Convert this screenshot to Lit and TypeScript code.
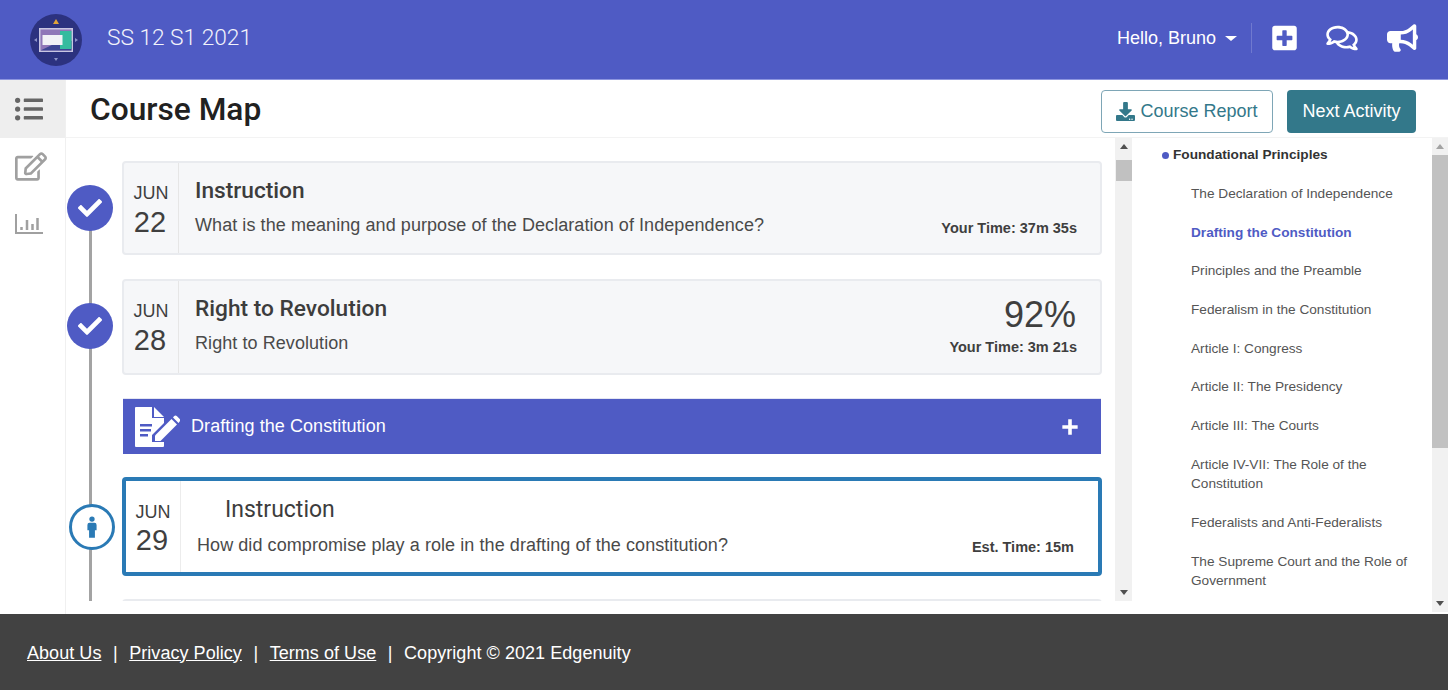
import { LitElement, html, css, svg } from "lit";
import { customElement } from "lit/decorators.js";

const CHECK = "M173.898 439.404l-166.4-166.4c-9.997-9.997-9.997-26.206 0-36.204l36.203-36.204c9.997-9.998 26.207-9.998 36.204 0L192 312.69 432.095 72.596c9.997-9.997 26.207-9.997 36.204 0l36.203 36.204c9.997 9.997 9.997 26.206 0 36.204l-294.4 294.401c-9.998 9.997-26.207 9.997-36.204-.001z";
const PLUS_SQUARE = "M400 32H48C21.5 32 0 53.5 0 80v352c0 26.5 21.5 48 48 48h352c26.5 0 48-21.5 48-48V80c0-26.5-21.5-48-48-48zm-32 252c0 6.6-5.4 12-12 12h-92v92c0 6.6-5.4 12-12 12h-56c-6.6 0-12-5.4-12-12v-92H92c-6.6 0-12-5.4-12-12v-56c0-6.6 5.4-12 12-12h92v-92c0-6.6 5.4-12 12-12h56c6.6 0 12 5.4 12 12v92h92c6.6 0 12 5.4 12 12v56z";
const COMMENTS = "M532 386.2c27.5-27.1 44-61.1 44-98.2 0-80-76.5-146.1-176.2-157.9C368.3 72.5 294.3 32 208 32 93.1 32 0 103.6 0 192c0 37 16.5 71 44 98.2-15.3 30.7-37.3 54.5-37.7 54.9-6.3 6.7-8.1 16.5-4.4 25 3.6 8.5 12 14 21.2 14 53.5 0 96.7-20.2 125.2-38.8 9.2 2.1 18.7 3.7 28.4 4.9C208.1 407.6 281.8 448 368 448c20.8 0 40.8-2.4 59.8-6.8C456.3 459.7 499.4 480 553 480c9.2 0 17.5-5.5 21.2-14 3.6-8.5 1.9-18.3-4.4-25-.4-.3-22.5-24.1-37.8-54.8zm-392.8-92.3L122.1 305c-14.1 9.1-28.5 16.3-43.1 21.4 2.7-4.7 5.4-9.7 8-14.8l15.5-31.1L77.7 256C64.2 242.6 48 220.7 48 192c0-60.7 73.3-112 160-112s160 51.3 160 112-73.3 112-160 112c-16.5 0-33-1.9-49-5.6l-19.8-4.5zM498.3 352l-24.7 24.4 15.5 31.1c2.6 5.1 5.3 10.1 8 14.8-14.6-5.1-29-12.3-43.1-21.4l-17.1-11.1-19.9 4.6c-16 3.7-32.5 5.6-49 5.6-54 0-102.2-20.1-131.3-49.7C338 339.5 416 272.9 416 192c0-3.4-.4-6.7-.7-10C479.7 196.5 528 238.8 528 288c0 28.7-16.2 50.6-29.7 64z";
const BULLHORN = "M576 240c0-23.63-12.95-44.04-32-55.12V32.01C544 23.26 537.02 0 512 0c-7.12 0-14.19 2.38-19.98 7.02l-85.03 68.03C364.28 109.19 310.66 128 256 128H64c-35.35 0-64 28.65-64 64v96c0 35.35 28.65 64 64 64h33.7c-1.39 10.48-2.18 21.14-2.18 32 0 39.77 9.26 77.35 25.56 110.94 5.19 10.69 16.52 17.06 28.4 17.06h74.28c26.05 0 41.69-29.84 25.9-50.56-16.4-21.52-26.15-48.36-26.15-77.44 0-11.11 1.62-21.79 4.41-32H256c54.66 0 108.28 18.81 150.98 52.95l85.03 68.03a32.023 32.023 0 0 0 19.98 7.02c24.92 0 32-22.78 32-32V295.13C563.05 284.04 576 263.63 576 240zm-96 141.42l-33.05-26.44C392.95 311.78 325.12 288 256 288v-96c69.12 0 136.95-23.78 190.95-66.98L480 98.58v282.84z";
const EDIT = "M402.3 344.9l32-32c5-5 13.7-1.5 13.7 5.7V464c0 26.5-21.5 48-48 48H48c-26.5 0-48-21.5-48-48V112c0-26.5 21.5-48 48-48h273.5c7.1 0 10.7 8.6 5.7 13.7l-32 32c-1.5 1.5-3.5 2.3-5.7 2.3H48v352h352V350.5c0-2.1.8-4.1 2.3-5.6zm156.6-201.8L296.3 405.7l-90.4 10c-26.2 2.9-48.5-19.2-45.6-45.6l10-90.4L432.9 17.1c22.9-22.9 59.9-22.9 82.7 0l43.2 43.2c22.9 22.9 22.9 60 .1 82.8zM460.1 174L402 115.9 216.2 301.8l-7.3 65.3 65.3-7.3L460.1 174zm64.8-79.7l-43.2-43.2c-4.1-4.1-10.8-4.1-14.8 0L436 82l58.1 58.1 30.9-30.9c4-4.2 4-10.8-.1-14.9z";
const LIST = "M48 48a48 48 0 1 0 48 48 48 48 0 0 0-48-48zm0 160a48 48 0 1 0 48 48 48 48 0 0 0-48-48zm0 160a48 48 0 1 0 48 48 48 48 0 0 0-48-48zm448 16H176a16 16 0 0 0-16 16v32a16 16 0 0 0 16 16h320a16 16 0 0 0 16-16v-32a16 16 0 0 0-16-16zm0-320H176a16 16 0 0 0-16 16v32a16 16 0 0 0 16 16h320a16 16 0 0 0 16-16V80a16 16 0 0 0-16-16zm0 160H176a16 16 0 0 0-16 16v32a16 16 0 0 0 16 16h320a16 16 0 0 0 16-16v-32a16 16 0 0 0-16-16z";
const DOWNLOAD = "M216 0h80c13.3 0 24 10.7 24 24v168h87.7c17.8 0 26.7 21.5 14.1 34.1L269.7 378.3c-7.5 7.5-19.8 7.5-27.3 0L90.1 226.1c-12.6-12.6-3.7-34.1 14.1-34.1H192V24c0-13.3 10.7-24 24-24zm296 376v112c0 13.3-10.7 24-24 24H24c-13.3 0-24-10.7-24-24V376c0-13.3 10.7-24 24-24h146.7l49 49c20.1 20.1 52.5 20.1 72.6 0l49-49H488c13.3 0 24 10.7 24 24zm-124 88c0-11-9-20-20-20s-20 9-20 20 9 20 20 20 20-9 20-20zm64 0c0-11-9-20-20-20s-20 9-20 20 9 20 20 20 20-9 20-20z";

const icon = (d: string, vb: string, w: number, h: number) =>
  html`<svg viewBox=${vb} width=${w} height=${h} fill="currentColor"><path d=${d}></path></svg>`;

const logo = html`<svg viewBox="0 0 52 52" width="52" height="52">
  <circle cx="26" cy="26" r="26" fill="#2c327f"></circle>
  <path d="M26 5l3 5h-6z" fill="#e0a43a"></path>
  <path d="M26 47l-2-3h4zM4 26l3-2v4zM48 26l-3-2v4z" fill="#8d93c9"></path>
  <rect x="9" y="14" width="34" height="24" fill="#c9c6e2"></rect>
  <path d="M10.500 15.500h31v21h-31z" fill="#8f77b8"></path>
  <path d="M10.500 36.500L30 27h11.500v9.500z" fill="#3d4593"></path>
  <rect x="30" y="17" width="11.500" height="18" fill="#35bb9f"></rect>
  <rect x="12.500" y="21" width="20" height="10" fill="#f1f1f6"></rect>
</svg>`;

const formIcon = html`<svg viewBox="0 0 46 42" width="46" height="42" fill="#fff">
  <path d="M1 2a1 1 0 0 1 1-1h16v11h12v5L18 29v7h12v4a1 1 0 0 1-1 1H2a1 1 0 0 1-1-1z"></path>
  <path d="M20 1l10 10H20z"></path>
  <path d="M6 18h12v2.500H6zM6 23h11v2.500H6zM6 28h8v2.500H6z" fill="#4f5bc4"></path>
  <path d="M21 35v-5.500L37.500 13l5.500 5.500L26.500 35z"></path>
  <path d="M39 11.500l5.500 5.500 1-1.200a2.200 2.200 0 0 0 0-3L43 10.200a2.200 2.200 0 0 0-3 0z"></path>
</svg>`;

const chart = html`<svg viewBox="0 0 28 20" width="28" height="20" fill="none" stroke="#a0a0a0" stroke-width="2">
  <path d="M1 0v19h27"></path>
  <path d="M6.500 16v-3M12 16V6M17.500 16v-6M22.500 16V4" stroke-width="2.500"></path>
</svg>`;

const person = svg`<svg viewBox="0 0 12 26" width="10" height="22" fill="#2a7ab5">
  <circle cx="6" cy="3.500" r="3.200"></circle>
  <path d="M3 8h6a2.500 2.500 0 0 1 2.500 2.500V17H9.500v9h-7v-9H.5v-6.500A2.500 2.500 0 0 1 3 8z"></path>
</svg>`;

const lessons = [
  "The Declaration of Independence",
  "Drafting the Constitution",
  "Principles and the Preamble",
  "Federalism in the Constitution",
  "Article I: Congress",
  "Article II: The Presidency",
  "Article III: The Courts",
  "Article IV-VII: The Role of the Constitution",
  "Federalists and Anti-Federalists",
  "The Supreme Court and the Role of Government",
];

@customElement("app-root")
export class AppRoot extends LitElement {
  static styles = css`
    :host {
      display: flex;
      flex-direction: column;
      height: 690px;
      width: 1448px;
      overflow: hidden;
      font-family: "Liberation Sans", Arial, sans-serif;
      color: #3f3f3f;
      background: #fff;
    }
    .top {
      height: 79px;
      flex: none;
      box-sizing: content-box;
      background: #4f5bc4;
      border-bottom: 1px solid #8d95df;
      display: flex;
      align-items: center;
      padding: 0 30px;
      color: #fff;
    }
    .logo { display: flex; margin-right: 25px; margin-top: 1px; }
    .course { font: 300 22.700px Roboto, sans-serif; color: #f2f3fb; margin-bottom: 4px; }
    .spacer { flex: 1; }
    .hello { font-size: 18px; display: flex; align-items: center; margin-bottom: 2px; }
    .caret {
      width: 0; height: 0; margin-left: 9px;
      border-left: 6px solid transparent;
      border-right: 6px solid transparent;
      border-top: 5px solid #fff;
    }
    .sep { width: 1px; height: 30px; background: #7079cf; margin: 0 20px 3px 14px; }
    .actions { display: flex; align-items: center; gap: 29px; margin-bottom: 3px; }
    .actions svg { display: block; }
    .main { flex: 1; display: flex; min-height: 0; }
    .side {
      width: 65px;
      flex: none;
      border-right: 1px solid #f0f0f0;
      color: #a0a0a0;
      display: flex;
      flex-direction: column;
    }
    .side .on {
      height: 58px;
      background: #eee;
      color: #666;
      display: flex;
      align-items: center;
      padding-left: 15px;
    }
    .side .edit { margin: 14px 0 0 15px; }
    .side .bars { margin: 33px 0 0 15px; }
    .side svg { display: block; }
    .content { flex: 1; min-width: 0; display: flex; flex-direction: column; }
    .title {
      height: 58px;
      flex: none;
      box-sizing: border-box;
      border-bottom: 1px solid #f3f3f3;
      display: flex;
      align-items: center;
      padding: 0 32px 0 24px;
    }
    h1 { margin: 2px 0 0; font: 500 31.700px Roboto, sans-serif; color: #212121; }
    .btn {
      height: 43px;
      box-sizing: border-box;
      border-radius: 4px;
      font-size: 18px;
      display: flex;
      align-items: center;
      justify-content: center;
      margin-top: 5px;
    }
    .outline {
      width: 172px;
      border: 1px solid #7ea6b6;
      color: #33788a;
      gap: 5px;
      margin-right: 14px;
    }
    .solid { width: 129px; background: #33788a; color: #fff; }
    .below { flex: 1; min-height: 0; display: flex; }
    .left { width: 1066px; flex: none; height: 463px; display: flex; }
    .timeline {
      position: relative;
      width: 1049px;
      flex: none;
      height: 463px;
      overflow: hidden;
      box-sizing: border-box;
      padding: 23px 0 0 56px;
      display: flex;
      flex-direction: column;
      gap: 23px;
    }
    .line {
      position: absolute;
      left: 23px;
      top: 80px;
      bottom: 0;
      width: 3px;
      background: #a3a3a3;
    }
    .entry { position: relative; width: 980px; flex: none; }
    .entry.first { margin-bottom: 1px; }
    .dot {
      position: absolute;
      left: -55px;
      top: 24px;
      width: 46px;
      height: 46px;
      border-radius: 50%;
      background: #4f5bc4;
      color: #fff;
      display: flex;
      align-items: center;
      justify-content: center;
    }
    .dot.here {
      left: -53px;
      top: 27px;
      box-sizing: border-box;
      background: #fff;
      border: 3px solid #2a7ab5;
    }
    .card {
      box-sizing: border-box;
      height: 94px;
      border: 2px solid #e9ebef;
      border-radius: 4px;
      background: #f6f7f9;
      display: flex;
    }
    .card.tall { height: 96px; }
    .card.current {
      height: 99px;
      background: #fff;
      border: 4px solid #2a7ab5;
    }
    .date {
      width: 55px;
      flex: none;
      border-right: 1px solid #e6e6e6;
      display: flex;
      flex-direction: column;
      align-items: center;
      padding-top: 20px;
      box-sizing: border-box;
    }
    .current .date { padding-top: 21px; border-right-color: #ececec; }
    .mon { font-size: 18px; line-height: 20px; }
    .day { font-size: 29px; line-height: 35px; margin: 2px 2px 0 0; }
    .current .day { margin-top: 1px; }
    .body {
      flex: 1;
      min-width: 0;
      position: relative;
      padding: 14px 23px 0 16px;
    }
    .current .body { padding: 15px 23px 0 16px; }
    .name { font: 500 22.700px/28px Roboto, sans-serif; color: #3d3d3d; }
    .current .name { margin-left: 28px; font-weight: 400; font-size: 23px; }
    .desc { font-size: 18px; line-height: 22px; margin-top: 9px; color: #4a4a4a; letter-spacing: 0.07px; }
    .current .desc { margin-top: 10px; }
    .time {
      position: absolute;
      right: 23px;
      bottom: 16px;
      font-size: 14.500px;
      line-height: 18px;
      font-weight: 700;
    }
    .tall .time { bottom: 17px; }
    .current .time { right: 24px; }
    .pct {
      position: absolute;
      right: 24px;
      top: 13px;
      font-size: 36px;
      line-height: 42px;
    }
    .band {
      height: 56px;
      box-sizing: border-box;
      margin: 0 1px;
      border-top: 1px solid #e4e6f2;
      background: #4f5bc4;
      color: #fff;
      display: flex;
      align-items: center;
      padding: 0 22px 0 11px;
      font-size: 18px;
      letter-spacing: 0.07px;
    }
    .band span { flex: 1; margin-left: 11px; }
    .bar {
      flex: none;
      background: #f1f1f1;
      display: flex;
      flex-direction: column;
      align-items: center;
      box-sizing: border-box;
    }
    .bar.a { width: 17px; height: 463px; }
    .bar.b { width: 16px; height: 474px; }
    .up, .down {
      width: 0; height: 0; flex: none;
      border-left: 4.500px solid transparent;
      border-right: 4.500px solid transparent;
    }
    .up { border-bottom: 5px solid #505050; margin-top: 6px; }
    .down { border-top: 5px solid #505050; margin: auto 0 6px; }
    .b .up { border-bottom-color: #a3a3a3; }
    .thumb { width: 16px; background: #c1c1c1; flex: none; }
    .a .thumb { height: 21px; margin-top: 11px; }
    .b .thumb { width: 16px; height: 293px; margin-top: 6px; }
    .nav { flex: 1; min-width: 0; height: 474px; overflow: hidden; padding: 8px 0 0 30px; box-sizing: border-box; }
    .unit {
      font-size: 13.650px;
      font-weight: 700;
      line-height: 18px;
      color: #333;
      display: flex;
      align-items: center;
      gap: 4px;
      margin-bottom: 20px;
    }
    .unit i { width: 7px; height: 7px; border-radius: 50%; background: #4f5bc4; }
    ul { list-style: none; margin: 0; padding: 0 20px 0 29px; }
    li {
      font-size: 13.650px;
      line-height: 19.600px;
      margin-bottom: 19.100px;
      color: #555;
    }
    li.active { color: #4f5bc4; font-weight: 700; }
    .foot {
      height: 76px;
      flex: none;
      box-sizing: border-box;
      padding: 2px 0 0 27px;
      background: #424242;
      color: #fff;
      display: flex;
      align-items: center;
      font-size: 18px;
      letter-spacing: 0.05px;
      gap: 11.500px;
    }
    .foot a { color: #fff; text-decoration: underline; }
  `;

  render() {
    const check = icon(CHECK, "0 0 512 512", 24, 24);
    return html`
      <header class="top">
        <div class="logo">${logo}</div>
        <div class="course">SS 12 S1 2021</div>
        <div class="spacer"></div>
        <div class="hello">Hello, Bruno<span class="caret"></span></div>
        <div class="sep"></div>
        <div class="actions">
          ${icon(PLUS_SQUARE, "0 0 448 512", 25, 28)}
          ${icon(COMMENTS, "0 0 576 512", 32, 28)}
          ${icon(BULLHORN, "0 0 576 512", 31, 28)}
        </div>
      </header>
      <div class="main">
        <nav class="side">
          <div class="on">${icon(LIST, "0 0 512 512", 28, 28)}</div>
          <div class="edit">${icon(EDIT, "0 0 576 512", 32, 29)}</div>
          <div class="bars">${chart}</div>
        </nav>
        <div class="content">
          <div class="title">
            <h1>Course Map</h1>
            <div class="spacer"></div>
            <div class="btn outline">${icon(DOWNLOAD, "0 0 512 512", 19, 19)}Course Report</div>
            <div class="btn solid">Next Activity</div>
          </div>
          <div class="below">
            <div class="left">
              <div class="timeline">
                <div class="line"></div>
                <div class="entry first">
                  <div class="dot">${check}</div>
                  <div class="card">
                    <div class="date"><div class="mon">JUN</div><div class="day">22</div></div>
                    <div class="body">
                      <div class="name">Instruction</div>
                      <div class="desc">What is the meaning and purpose of the Declaration of Independence?</div>
                      <div class="time">Your Time: 37m 35s</div>
                    </div>
                  </div>
                </div>
                <div class="entry">
                  <div class="dot">${check}</div>
                  <div class="card tall">
                    <div class="date"><div class="mon">JUN</div><div class="day">28</div></div>
                    <div class="body">
                      <div class="name">Right to Revolution</div>
                      <div class="desc">Right to Revolution</div>
                      <div class="pct">92%</div>
                      <div class="time">Your Time: 3m 21s</div>
                    </div>
                  </div>
                </div>
                <div class="entry">
                  <div class="band">${formIcon}<span>Drafting the Constitution</span>${icon("M8 1.500h4v6.500h6.500v4H12v6.500H8V12H1.500V8H8z", "0 0 20 20", 18, 18)}</div>
                </div>
                <div class="entry">
                  <div class="dot here">${person}</div>
                  <div class="card current">
                    <div class="date"><div class="mon">JUN</div><div class="day">29</div></div>
                    <div class="body">
                      <div class="name">Instruction</div>
                      <div class="desc">How did compromise play a role in the drafting of the constitution?</div>
                      <div class="time">Est. Time: 15m</div>
                    </div>
                  </div>
                </div>
                <div class="entry"><div class="card"></div></div>
              </div>
              <div class="bar a"><div class="up"></div><div class="thumb"></div><div class="down"></div></div>
            </div>
            <div class="nav">
              <div class="unit"><i></i>Foundational Principles</div>
              <ul>
                ${lessons.map((l, i) => html`<li class=${i === 1 ? "active" : ""}>${l}</li>`)}
              </ul>
            </div>
            <div class="bar b"><div class="up"></div><div class="thumb"></div><div class="down"></div></div>
          </div>
        </div>
      </div>
      <footer class="foot">
        <a>About Us</a><span>|</span><a>Privacy Policy</a><span>|</span><a>Terms of Use</a><span>|</span><span>Copyright © 2021 Edgenuity</span>
      </footer>
    `;
  }
}
